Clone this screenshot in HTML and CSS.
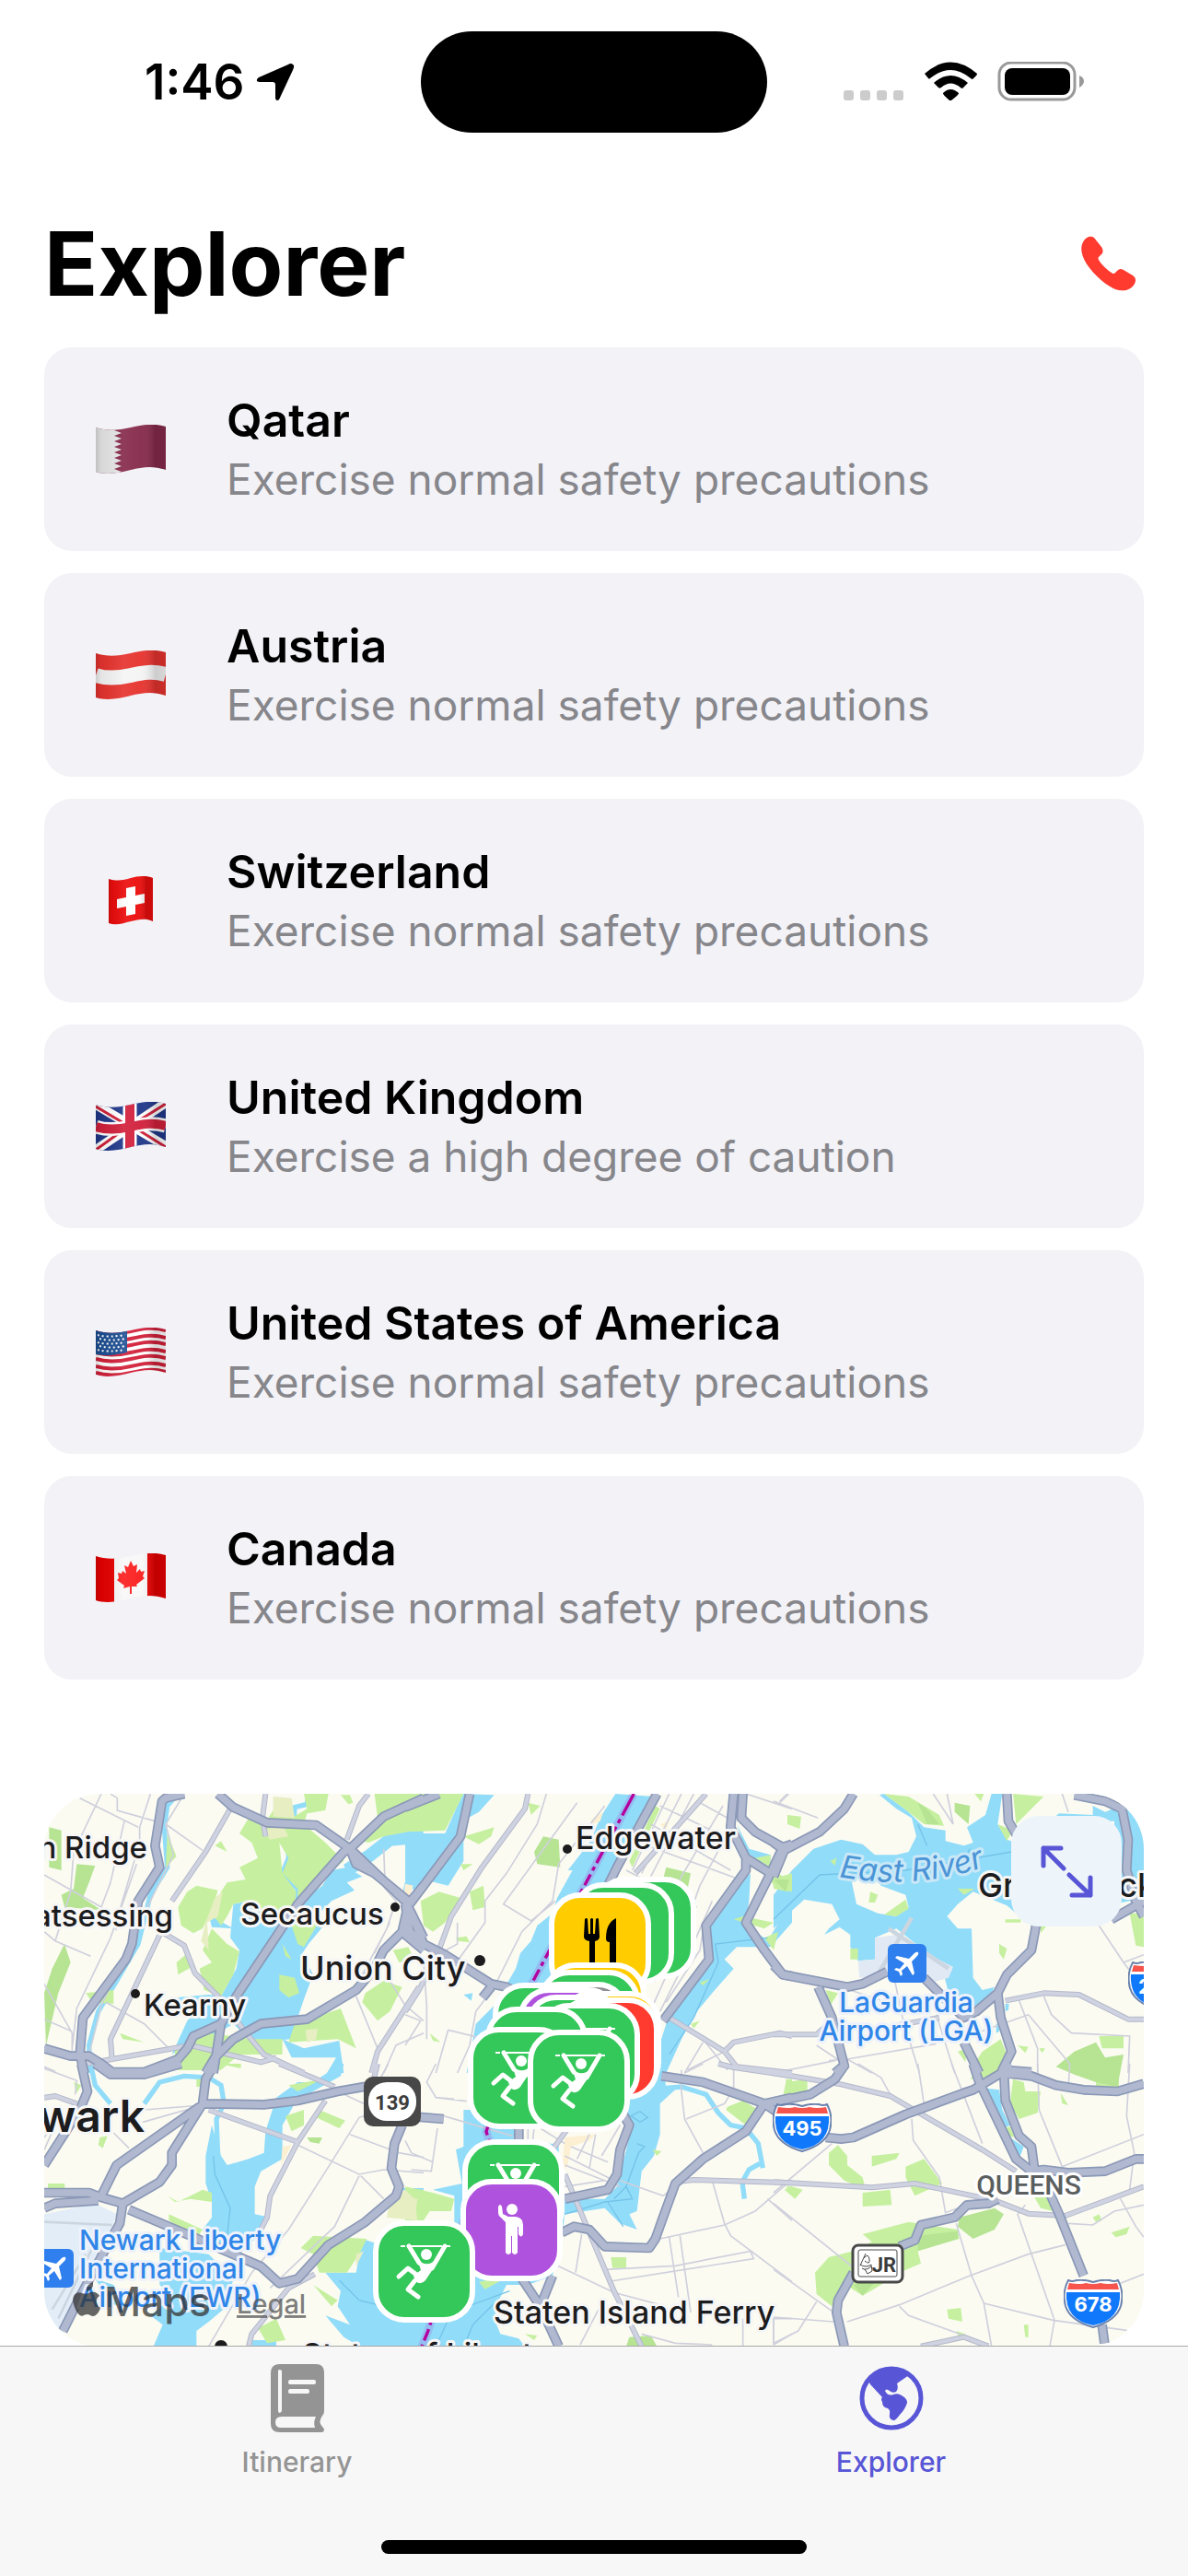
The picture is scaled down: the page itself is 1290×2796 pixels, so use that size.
FILE: index.html
```html
<!DOCTYPE html>
<html lang="en">
<head>
<meta charset="utf-8">
<meta name="viewport" content="width=device-width, initial-scale=1">
<title>Explorer</title>
<link rel="stylesheet" href="styles.css">
</head>
<body>
<svg class="sprite" width="0" height="0" aria-hidden="true">
  <defs>
    <clipPath id="flag-shape"><path d="M0 3C12 7 25 6 38 3S62-2 76 2V49C62 44 50 46 38 49S12 55 0 51Z"/></clipPath>
    <clipPath id="flag-square"><path d="M14 3C24 6 31 4 38 2S55-1 62 2V49C54 45 46 47 38 49S22 54 14 51Z"/></clipPath>
    <linearGradient id="flag-shade">
      <stop offset="0" stop-color="#000" stop-opacity=".16"/>
      <stop offset=".08" stop-color="#000" stop-opacity=".06"/>
      <stop offset=".4" stop-color="#fff" stop-opacity=".08"/>
      <stop offset=".65" stop-color="#fff" stop-opacity=".04"/>
      <stop offset=".85" stop-color="#000" stop-opacity=".16"/>
      <stop offset="1" stop-color="#000" stop-opacity=".12"/>
    </linearGradient>
    <path id="wave" d="M0 0C12 4 25 3 38 0S62-5 76-1"/>
    <symbol id="climber" viewBox="0 0 111 111">
      <path d="M30 28h5M41 28h34M80 28h4" fill="none" stroke="#fff" stroke-width="2"/>
      <path d="M39 28 50 46M78 28 64 52M28 61 38 52 50 61M45 66 38 75 49 83" fill="none" stroke="#fff" stroke-width="5" stroke-linecap="round" stroke-linejoin="round"/>
      <circle cx="58" cy="37" r="6" fill="#fff"/>
      <path d="M48 42Q58 52 68 43L71 44 57 65Q52 71 46 66L44 60 52 54Z" fill="#fff"/>
    </symbol>
    <symbol id="plane" viewBox="0 0 42 42">
      <rect width="42" height="42" rx="6" fill="#2f80ee"/>
      <path d="M33 9c-2-1-4 1-5 2l-5 5-13-3-2 2 10 6-5 6-4-1-2 2 5 2 2 5 2-2-1-4 6-5 6 10 2-2-3-13 5-5c1-1 3-3 2-5Z" fill="#fff"/>
    </symbol>
    <symbol id="shield" viewBox="0 0 64 53">
      <path d="M5 1Q9 3 14 1Q23 0 32 3Q41 0 50 1Q55 3 59 1Q66 14 62 29Q57 45 32 52Q7 45 2 29Q-2 14 5 1Z" fill="#fff" stroke="#6b82ad" stroke-width="2"/>
      <path d="M6 4Q19 6 24 4Q32 6 40 4Q48 6 58 4L60 11H4Z" fill="#f6544c"/>
      <path d="M3 14H61Q63 44 32 50Q1 44 3 14Z" fill="#1079fb"/>
    </symbol>
  </defs>
</svg>

<div class="screen">
  <header class="status">
    <div class="status-side status-left">
      <span>1:46</span>
      <svg class="location" viewBox="0 0 42 42" aria-hidden="true"><path d="M40 2C42 3 41 6 40 8L26 38C25 42 21 42 21 38V24Q21 21 18 21H4C0 21 0 18 3 16L35 2Q38 0 40 2Z"/></svg>
    </div>
    <div class="island"></div>
    <div class="status-side status-right">
      <svg width="262" height="44" viewBox="0 0 262 44" aria-label="Signal, Wi-Fi and battery">
        <g fill="#ccc"><rect y="31" width="11" height="11" rx="3"/><rect x="18" y="31" width="11" height="11" rx="3"/><rect x="36" y="31" width="11" height="11" rx="3"/><rect x="54" y="31" width="11" height="11" rx="3"/></g>
        <path d="M88 13Q116-12 145 13Q146 14 140 19Q139 19 138 18Q116 0 94 18Q93 19 92 18ZM98 23Q116 7 135 23L129 29Q128 29 127 28Q116 19 106 28Q104 29 103 28ZM108 34Q116 26 125 34Q126 35 117 42H115Q107 35 108 34Z"/>
        <rect x="169" y="1" width="82" height="40" rx="13" fill="none" stroke="#999" stroke-width="3"/>
        <rect x="175" y="7" width="71" height="29" rx="8"/>
        <path d="M256 15Q261 17 261 21T256 28Z" fill="#999"/>
      </svg>
    </div>
  </header>

  <main class="content">
    <div class="heading">
      <h1>Explorer</h1>
      <button class="call" type="button" aria-label="Emergency numbers">
        <svg viewBox="0 0 60 60" aria-hidden="true"><path d="M14 2C10-1 4 2 2 7C-2 14 1 25 10 36C18 46 28 54 37 58C46 61 54 59 58 52C60 48 59 45 56 43L46 37C43 35 41 36 39 38L37 40Q35 42 33 40C28 37 22 31 19 26Q18 24 19 23L22 20C24 18 24 15 22 12Z"/></svg>
      </button>
    </div>

    <ul class="countries">
      <li class="country">
        <svg class="flag" viewBox="0 0 76 53" role="img" aria-label="Flag of Qatar"><g clip-path="url(#flag-shape)"><path d="M0-2h76v60H0Z" fill="#862a4b"/><path d="M0-2H20L28 3 20 6 28 9 20 12 28 15 20 18 28 21 20 24 28 27 20 30 28 33 20 36 28 39 20 42 28 45 20 48 28 51 20 55H0Z" fill="#e6e6e6"/><path d="M0-2h76v60H0Z" fill="url(#flag-shade)"/></g></svg>
        <div class="country-text"><h2>Qatar</h2><p>Exercise normal safety precautions</p></div>
      </li>
      <li class="country">
        <svg class="flag" viewBox="0 0 76 53" role="img" aria-label="Flag of Austria"><g clip-path="url(#flag-shape)"><path d="M0-2h76v60H0Z" fill="#e6332e"/><use href="#wave" y="27" fill="none" stroke="#f4f4f4" stroke-width="16"/><path d="M0-2h76v60H0Z" fill="url(#flag-shade)"/></g></svg>
        <div class="country-text"><h2>Austria</h2><p>Exercise normal safety precautions</p></div>
      </li>
      <li class="country">
        <svg class="flag" viewBox="0 0 76 53" role="img" aria-label="Flag of Switzerland"><g clip-path="url(#flag-square)"><path d="M0-2h76v60H0Z" fill="#ec0d0d"/><path d="M33 13 43 11V21L53 19V29L43 31V41L33 43V33L23 35V25L33 23Z" fill="#fff"/><path d="M14-2h48v60H14Z" fill="url(#flag-shade)"/></g></svg>
        <div class="country-text"><h2>Switzerland</h2><p>Exercise normal safety precautions</p></div>
      </li>
      <li class="country">
        <svg class="flag" viewBox="0 0 76 53" role="img" aria-label="Flag of the United Kingdom"><g clip-path="url(#flag-shape)"><path d="M0-2h76v60H0Z" fill="#20388a"/><path d="M0 3 76 48M0 52 76 1" stroke="#fff" stroke-width="10"/><path d="M0 5 32 24M0 52 32 29M76 49 44 29M76 2 44 22" stroke="#d0203a" stroke-width="3"/><use href="#wave" y="27" fill="none" stroke="#fff" stroke-width="15"/><path d="M37-2V58" stroke="#fff" stroke-width="15"/><use href="#wave" y="27" fill="none" stroke="#d2203c" stroke-width="10"/><path d="M37-2V58" stroke="#d2203c" stroke-width="10"/><path d="M0-2h76v60H0Z" fill="url(#flag-shade)"/></g></svg>
        <div class="country-text"><h2>United Kingdom</h2><p>Exercise a high degree of caution</p></div>
      </li>
      <li class="country">
        <svg class="flag" viewBox="0 0 76 53" role="img" aria-label="Flag of the United States"><g clip-path="url(#flag-shape)"><path d="M0-4h76v64H0Z" fill="#fff"/><g fill="none" stroke="#d2203a" stroke-width="4"><use href="#wave" y="4"/><use href="#wave" y="12"/><use href="#wave" y="19"/><use href="#wave" y="27"/><use href="#wave" y="34"/><use href="#wave" y="42"/><use href="#wave" y="49"/></g><path d="M0 0H34V27Q14 32 0 29Z" fill="#1d4f93"/><path d="M2 8q12 3 30 0M4 12q12 3 28 0M2 16q12 3 30 0M4 20q12 3 28 0M2 24q12 3 30 0" fill="none" stroke="#fff" stroke-width="2" stroke-dasharray="2 3"/><path d="M0-2h76v60H0Z" fill="url(#flag-shade)"/></g></svg>
        <div class="country-text"><h2>United States of America</h2><p>Exercise normal safety precautions</p></div>
      </li>
      <li class="country">
        <svg class="flag" viewBox="0 0 76 53" role="img" aria-label="Flag of Canada"><g clip-path="url(#flag-shape)"><path d="M0-2h76v60H0Z" fill="#f8f8f8"/><path d="M0-2H20V58H0ZM56-2H76V58H56Z" fill="#e60000"/><path d="M38 8 41 14 45 12 44 21 48 17 49 20 53 19 51 25 53 27 44 34 45 36 39 36V44H37V36L30 38 31 35 23 29 25 27 24 21 28 22 29 19 33 22 31 13 35 15Z" fill="#fb1f1f"/><path d="M0-2h76v60H0Z" fill="url(#flag-shade)"/></g></svg>
        <div class="country-text"><h2>Canada</h2><p>Exercise normal safety precautions</p></div>
      </li>
    </ul>

    <section class="map" aria-label="Map">
      <svg class="map-canvas" viewBox="0 0 1194 600">
        <defs>
          <g id="highways">
            <g transform="translate(-24 -51)"><path d="M480 51 420 65 408 75 385 220 400 290 330 400 310 540 290 590 150 780 140 900 155 960M24 880 110 905 170 905 210 930 245 957 350 957 460 915 490 880 510 840 600 800 650 710 850 410 1000 240 1020 230 1130 125 1260 65M590 51 640 95 750 145 910 153 1020 230 1210 410M1020 230 1040 280 1100 310 1210 400M1260 350 1210 410 1190 500 1130 560 1100 620 1040 690 880 785 730 800 640 850 580 910 550 960M600 800 575 960M1210 420 1200 510 1260 560M1210 420 1260 520"/></g>
            <g transform="translate(1176 -51)"><path d="M210 51 180 190 15 410M0 95 110 51M0 410 20 440 60 540 130 575 280 670 330 680 400 720M0 410 15 500 60 545M280 680 252 715M820 51 690 290 660 350M1070 51 1060 160 1110 260 1110 300 980 480 990 590 840 790M1100 51 1095 130 1140 175 1230 225 1190 310 1110 470 1170 560 1230 640 1260 645M1110 260 1190 310M1230 225 1260 215"/></g>
            <g transform="translate(2376 -51)"><path d="M260 51 230 100 150 175 35 235 0 210M35 235 0 320M0 610 30 640 240 680 290 670 370 630M490 650 560 720 620 780 660 760 730 700 760 640 840 560 855 480M760 51 765 140 800 200M980 55 1080 75 1135 100 1155 200 1150 300 1180 400 1206 450M1100 460 1206 400M145 680 190 780 230 935 200 960M620 860 670 960M730 700 740 780 775 890 745 950 840 957"/></g>
            <g transform="translate(-24 879)"><path d="M24 420 170 420 210 435 280 455 400 385 440 330 440 290 540 130 550 50 580 0M210 430 260 330 530 140M24 330 140 150 165 90 145 0M190 0 240 35 350 35 470 0M540 130 740 133 850 120 980 90 1065 75 1200 90M24 470 60 455 200 445M280 455 270 520 220 610 140 760 85 870M300 475 500 560 650 625 730 660 790 715 850 700 950 590 1070 515 1170 430 1180 400 1155 340 1165 260 1190 200"/></g>
            <g transform="translate(1176 879)"><path d="M690 130 730 200 700 280 690 360 660 410 520 440M835 40 970 60 1170 130 1260 110M1170 130 1110 220 970 310 880 390 840 500 815 570 795 600 650 595 600 540 550 530 510 550M380 700 440 790 500 920M480 690 440 790M370 200V250M0 170 125 180M1170 130 1260 190"/></g>
            <g transform="translate(2376 879)"><path d="M235 0 200 50 120 100 0 125M170 240 220 245 260 240 430 165 620 95 650 85 750 25 770 0M650 0 670 60 790 310 840 350M750 25 755 120 800 235 840 270 850 345M750 30 840 40 920 70 1010 85 1120 90 1206 65M840 350 880 345 960 355 1080 350 1180 310 1206 310M850 350 890 400 930 490 1010 690M1070 850 1078 910M730 440 700 455 630 460 590 500 480 525 460 575 410 595M260 680 210 770 205 810 230 920"/></g>
          </g>
          <g id="avenues">
            <g transform="translate(-24 -51)"><path d="M630 100 550 240 440 400M405 500 240 850 245 915M405 500 480 545 515 635 590 710 690 840 740 900 870 960M745 51 735 130 745 190M160 930 500 870 730 925 780 910M1080 51 1050 90 1010 200M1245 680 1110 890 1090 960"/></g>
            <g transform="translate(1176 -51)"><path d="M400 51 390 100 250 290 150 450 110 560M110 560 45 690 0 760M980 51 750 310M860 780 1040 890 1080 940 1260 960M1040 890 1070 860 1220 830 1260 840"/></g>
            <g transform="translate(2376 -51)"><path d="M0 835 140 835 190 790M400 805 540 780M755 725 880 700 995 705 1155 785H1206"/></g>
            <g transform="translate(-24 879)"><path d="M560 150 850 255M790 0 970 75M940 120 850 255 760 430 750 500 730 540M1110 0 1095 60M24 110 60 105 130 130M905 685 820 730 700 880 690 920"/></g>
            <g transform="translate(1176 879)"><path d="M480 280 530 210M520 360 680 740 770 920M880 385 940 378 1260 388M1020 0 1070 12 1260 40"/></g>
            <g transform="translate(2376 879)"><path d="M0 30 210 65 380 105 680 280 790 350M0 385 320 403 460 390 650 430 720 445 830 488 950 495 1206 400M480 920 620 890 700 920"/></g>
          </g>
        </defs>

        <svg viewBox="0 0 3582 1800" width="1194" height="600">
          <rect width="3582" height="1800" fill="#fbfbf2"/>

          <g class="water">
            <g transform="translate(-24 -51)">
              <path class="creek" d="M460 51 425 90 415 160 425 290 370 380 330 540 260 660 200 760 170 870 175 960"/>
              <path d="M640 410 690 400 760 470 850 410 930 350 960 300 1010 290 1060 320 1010 340 1035 365 960 400 920 440 935 480 885 540 865 570 900 640 870 720 850 780 830 850 700 860 640 800 590 830 500 860 440 900 490 790 540 740 440 730 450 715 560 705 600 710 650 620 660 560 630 520ZM800 850 870 880 985 855 1000 960H945L975 910H830Z"/>
              <path class="creek" d="M885 55 880 85 840 95 838 130 815 175 820 260 800 310 850 360V420M870 170 970 260M1260 290 1210 330 1195 390"/>
              <path class="river" d="M1260 190 1150 200 1080 255 1010 300"/>
              <path d="M560 445 640 490 570 485Z"/>
            </g>
            <g transform="translate(1176 -51)">
              <path d="M685 51 640 120 600 210 530 300H545L495 390 480 440 430 480 410 530 375 570 360 620 325 680 290 740 230 800 200 960H400L500 640 700 280 810 60ZM1080 150 1120 230 1190 250V285L1150 270 1110 240ZM1125 310 1120 400 1110 470 1180 530 1260 400V470L1190 550H1080L1040 590 1070 620 1000 700 950 760 900 850 850 960H800L850 800 990 600 980 480 1100 330ZM0 180 130 180 170 90 190 51 290 55 240 110 205 130 190 200 190 270 140 350 60 330 40 380 0 330ZM190 705 220 700 215 725Z"/>
            </g>
            <g transform="translate(2376 -51)">
              <path d="M0 380 60 300 130 230 220 200 290 215 330 250 400 250 440 240 465 190 450 130 400 100 345 55 360 51 440 110 490 160 560 170V205L620 220 650 210 630 160 690 120 710 51H745L730 150 760 200 790 210V440L760 415 650 370 600 410 565 450 600 490H645L650 650 680 690 720 680 700 720 640 750 580 740 560 660 540 600 400 490 330 520V590L275 595 250 550V510L215 485 165 510 180 490 215 460 190 410 100 395 50 440 0 490ZM1040 90 1080 110 1130 90 1180 100 1206 200V440L1160 400 1110 410V140H900L930 115 1040 120ZM725 800l15-5-5 30-10 5ZM755 735h12l-2 20-10 5Z"/>
            </g>
            <g transform="translate(-24 879)">
              <path class="creek" d="M175 0 190 70 240 130M350 130 400 60 480 40 560 45 600 70 610 130 585 180 590 300"/>
              <path d="M570 200 600 300 620 330 690 310 740 290 745 220 780 110 850 60H900L960 20 970 0H1000L990 40 900 90 840 130 800 200V310L730 350 710 400V490L760 500 720 560 660 620 600 600 540 540 570 500V450L550 390V300ZM400 600 560 620 640 700 620 790 560 840 520 870V920H380L410 850 370 820 440 760 400 720ZM190 700 250 720 300 800 240 780ZM1060 570 1150 600 1260 600V920H1050L1000 890 940 820 1020 850 980 790 990 740 940 680 1040 680ZM700 900h80v20h-80ZM1180 405h80v40Z"/>
            </g>
            <g transform="translate(1176 879)">
              <path d="M190 150H380V260H500V430L520 440 650 440 690 400 740 200 720 160V0H840L850 80 890 75 830 130V230L810 300 770 350 755 480 730 490 755 540 700 520 650 470 520 490 510 560 480 690 400 720 330 720 300 780 290 830 310 880 370 895 390 920H0V560H160V430L90 410 185 390 165 280 190 270Z"/>
              <path class="creek" d="M840 80 900 75 980 100 1020 160 1060 200 1110 210 1150 260 1165 340M1155 325 1120 345 1098 385 1105 440"/>
            </g>
            <g transform="translate(2376 879)"><path d="M695 80 735 85 745 150 770 200 750 210 720 170ZM770 240 815 270 800 310 770 270Z"/></g>
          </g>

          <g fill="#c6f0a0">
            <path transform="translate(-24 -51)" d="M620 340 680 330 660 290 720 260 700 210 660 180 690 130 740 150 780 90 830 130 880 100 870 51H950L940 105 880 115 870 150 940 210 1000 270 960 300 850 410 850 360 800 310 820 260 790 210 800 310 845 370 840 415 760 470 690 400 640 410 620 450 600 480 570 440 600 370ZM570 490 620 540 660 565 640 640 600 710 545 690 530 620 570 600 540 560ZM490 370 520 350 590 365 570 430 540 490 510 505 470 480 460 420ZM1100 51H1260V165L1130 190 1080 210 1040 200 1110 130ZM840 800 990 750 1040 880 980 850 820 860ZM450 880 560 830 700 850H800V900H660L600 950H450ZM270 830 350 860 280 850ZM455 600 490 570 515 610 460 640ZM580 220 600 205 620 240ZM1070 700 1130 660 1190 680 1150 760 1110 790 1060 730ZM160 700 250 690V735L180 730ZM800 540 830 590 810 580ZM790 640 840 650 855 700 820 715 790 690ZM1160 560 1210 550 1230 590 1180 600ZM425 180 455 255 420 290ZM990 55h30l10 25-15 5ZM830 480 930 450 870 550 850 540Z"/>
            <path transform="translate(1176 -51)" d="M0 100 40 51H190L130 170 20 175ZM190 190 290 160 280 190 240 215ZM400 80 440 90 410 120ZM50 400 110 370 180 390 130 470 90 500 60 480ZM210 370 255 350 260 420 220 430ZM1140 260 1190 250V290ZM1190 330 1260 310V370L1200 350ZM1070 460 1100 450 1200 470 1170 490ZM1170 520 1215 500 1200 560ZM80 830 115 860 90 855ZM930 800 960 790 940 815ZM180 280 220 280 190 300ZM165 520 200 515 210 535 170 530ZM815 90 830 100 740 290 730 270ZM960 665 990 655 970 675Z"/>
            <path transform="translate(2376 -51)" d="M360 51 440 60 540 120 555 155 490 150 440 110ZM655 51h30l-10 25ZM780 51 880 60 840 100 790 150ZM730 150 780 170 760 205ZM45 120 90 125 85 165 45 150ZM0 300 45 330 50 370 0 360ZM600 360 655 360 620 380ZM735 540 760 555 750 590 735 570ZM1160 440H1206V550L1180 545ZM170 690 210 700 185 740ZM680 890 740 850 760 900 740 950 690 960 660 920ZM795 870 830 875 820 895ZM600 890 630 880 625 925ZM1060 840H1140V880H1070ZM865 880H885L875 895ZM250 555h25v35h-25ZM755 460h50v10h-50ZM185 270 205 260 200 285ZM870 480h20l-20 25Z"/>
            <path transform="translate(-24 879)" d="M810 170 870 150V200L830 220ZM920 150 1005 185 985 210 910 175ZM205 240 230 235 215 275 200 265ZM425 430 460 450 540 410 570 420V450L500 440 450 450ZM430 490 540 540 520 570 430 510ZM860 600 900 560 1075 570 1050 620 1010 680 920 680 900 620ZM720 860 780 830 810 900 750 910ZM900 720 980 770 960 790ZM120 60 145 70 130 95ZM36 390h55v15h-55ZM455 0H560V20H460ZM520 50h30v25h-30ZM820 70 930 50 850 90ZM590 0h75v15ZM1200 410h60v100h-60Z"/>
            <path transform="translate(1176 879)" d="M0 400 90 420 160 440 150 480 80 480 60 510 0 500ZM1050 140 1100 120 1150 150 1110 200 1045 150ZM1240 50h20v60h-20ZM805 280 835 285 820 300ZM670 630h50v35h-45ZM390 880 430 885 420 900ZM240 710 340 690 260 735ZM1240 400h20v30Z"/>
            <path transform="translate(2376 879)" d="M680 0H740L720 40 640 50ZM780 50 815 60 820 90H870L860 160 800 180 770 130ZM40 60 110 50V90L80 110H30ZM180 290 210 265 240 300V330L290 370 300 410 230 380 180 330ZM320 300 410 290 400 310 320 335ZM430 335 490 310 550 390 460 430 430 370ZM290 420 380 410 385 460 290 465ZM35 410 60 400 95 410 70 440ZM850 435 900 430 910 480 870 470ZM290 555 440 515 470 520 600 540 605 570 470 610 480 650 410 680 350 720 290 755 250 730 190 790 140 750 135 680 180 630 260 610 320 580ZM565 800 610 795 615 840 570 830ZM1040 500 1060 490 1070 510 1050 515ZM1100 550 1160 530 1150 555 1115 565ZM935 95 960 135 940 130ZM815 850h15v40h-10ZM595 870 625 880 605 895ZM750 210 770 205 785 240 765 235ZM1050 40h75v35h-75Z"/>
          </g>
          <g fill="#b6e493">
            <path transform="translate(-24 -51)" d="M40 160 80 170V300L40 290ZM130 280 190 285 170 340 150 390 210 430 90 420 80 380 120 360ZM90 540 110 600 70 700 30 870 24 700 50 620Z"/>
            <path transform="translate(1176 -51)" d="M420 240 450 190 500 200 505 290 430 280ZM850 290 930 310 920 360 840 330ZM1200 330 1250 330 1240 370Z"/>
            <path transform="translate(2376 -51)" d="M590 80 640 90 635 150 590 110ZM980 890 1050 860 1080 910 1140 900 1120 1005 1050 990 980 965 920 940ZM470 80 500 100 540 150 500 150ZM315 370 340 380 330 405H310Z"/>
            <path transform="translate(2376 879)" d="M605 500 720 470 750 490 720 540 650 570 600 530ZM470 560 600 545 600 570 470 610ZM260 720 350 690 290 755Z"/>
            <path transform="translate(1176 879)" d="M730 890 800 885 820 920H720Z"/>
            <path transform="translate(-24 879)" d="M880 240H930L920 260 890 255Z"/>
          </g>
          <g fill="#e6eec2">
            <path transform="translate(-24 -51)" d="M770 60 830 65 840 130 770 125ZM580 390 605 370 590 450 555 470 560 560 535 530 550 470ZM875 820 915 815 910 850 880 860ZM740 170 800 150 820 190 760 200Z"/>
            <path transform="translate(-24 879)" d="M1150 450 1200 410 1230 440 1240 510 1140 500ZM1040 620 1065 610 1040 660Z"/>
            <path transform="translate(1176 879)" d="M0 430 40 440 30 500 0 500Z"/>
          </g>
          <g fill="#fdf0d2">
            <path transform="translate(1176 879)" d="M520 240 620 230 600 250 540 270 530 330 510 350Z"/>
            <path transform="translate(-24 879)" d="M800 270 830 265 795 330Z"/>
            <path transform="translate(1176 -51)" d="M605 135 645 110 635 140 610 150ZM0 345 25 350 10 390H0ZM830 150l30-10-10 30Z"/>
            <path transform="translate(-24 -51)" d="M1200 345 1225 350 1210 390 1195 380Z"/>
          </g>
          <path transform="translate(2376 -51)" fill="#fbfbf2" d="M255 340 280 310 330 320 350 350 430 380 440 420 400 450 340 440 270 410Z"/>
          <path transform="translate(2376 -51)" fill="#c6f0a0" d="M315 370 340 380 330 405H310ZM360 445 430 395 440 425 400 450Z"/>
          <g transform="translate(2376 -51)"><path fill="#e1eaf4" d="M275 595 330 590V520L400 510 500 570 585 615 570 650 520 665 400 640 280 650Z"/><path d="M375 490 570 620M450 455 345 630" fill="none" stroke="#cbd6e1" stroke-width="14"/></g>
          <g transform="translate(-24 879)"><path fill="#e2edf7" d="M24 490 190 455 260 490 220 600 130 800 90 870 60 890 24 860Z"/><path d="M24 515 245 525M200 560 70 830M160 620 50 800" fill="none" stroke="#cbd6e1" stroke-width="8"/></g>

          <g class="ferry-lanes">
            <path transform="translate(2376 -51)" d="M0 460 150 315 430 300 775 240M640 230 620 270M470 150 500 220"/>
            <path transform="translate(1176 879)" d="M110 900 150 810 340 740M200 900 220 850 300 770M520 490 650 450 740 440 720 400 760 290 780 270 755 260M735 170 765 155 790 175 765 190ZM660 450 710 530M680 440 720 400"/>
            <path transform="translate(1176 -51)" d="M860 900 940 780 1020 600 1010 540 1180 520"/>
            <path transform="translate(-24 879)" d="M575 300 580 360 630 470 620 560M985 705 1050 770 1130 790"/>
          </g>

          <g class="streets">
            <path transform="translate(-24 -51)" d="M210 51 120 240 110 370 60 530M24 315 210 420 260 495M140 65 330 160M240 51 262 65V105L385 140M370 51 335 160V210L270 430M285 140 240 340 210 420M480 51 420 150 445 250 340 460M24 500 60 530 175 580M24 670 115 830V900M420 150 540 235M325 280 240 520 130 750 115 880M225 730 350 800 430 880M340 460 210 740 170 900M1130 230 1135 360 1170 400 1140 490 1060 640M1040 710 1110 880M1150 660 1200 740 1260 790M1260 830 1170 870 1130 960M24 940 60 955M24 785 115 825M1150 470 1100 570"/>
            <path transform="translate(1176 -51)" d="M460 51 430 150 330 310 260 400V470L160 610M560 80 320 410 410 465 490 400M650 90 500 280 480 400 380 500 290 680 230 760 210 870 170 960M1110 51 1260 100M860 51 740 300M900 51 770 310M940 51 800 320M1035 90 900 320 840 440M1060 160 960 350 870 600 780 800M1000 400 930 560 830 760M975 470 960 560 850 730M830 90 1040 190M800 150 1060 300M960 80 1050 130M760 210 1090 330M720 300 950 420M170 470 170 540 60 600 70 740 70 850M1220 80 1250 51M0 770 50 790 0 870M140 820 260 850M140 820 100 960M970 860 910 960M970 850 1050 950M920 950 1040 890"/>
            <path transform="translate(2376 -51)" d="M145 130 0 75M1060 480 1140 600 1170 640M395 660 420 780 475 960M530 770 590 960M240 915 530 865M800 725 860 880V960M880 710 905 770 970 830 1160 840 1155 960M830 770 965 930M20 75 45 51M180 920 240 915 320 960M660 830 830 770M520 51 585 150 565 51M940 51 960 110M0 960 200 920M1140 600 1206 575M250 690 400 740M140 870 230 930"/>
            <path transform="translate(-24 879)" d="M24 15 130 55 125 100M350 150 540 135 345 190M250 225 300 275M850 265 1050 360 1130 345 1260 355M1065 170 1050 175 960 320 820 540 700 680 560 920M1050 365 970 530 760 730M1020 230 1180 290 1260 305M1055 365 1130 440M24 240 70 180M24 280 60 200M1145 0 1080 120M980 90 1065 130"/>
            <path transform="translate(1176 879)" d="M700 380 840 430 860 415M900 20V90L910 180 970 290M1000 380 1040 520 1060 560 1260 710M830 570 1040 525 1140 480 1250 385M860 565 890 760M895 560 930 810M650 670 880 658 1125 610 1135 635 670 708M575 555 555 680M490 655 680 745 830 785M770 880 880 910 1000 915M1100 920V830M1200 915V830H1260M1070 20V80L1040 130 915 180M100 110 160 115M100 0 70 60 100 110 200 122M105 210 85 350 20 345M0 250 20 290 90 320M1180 440 1260 510M125 170 350 235M400 210V250M420 210 415 250M440 210 520 260M520 300 680 380M540 270 660 320M520 400 650 380M560 310 600 230M640 300 700 200M620 230 600 340M520 330 700 400M570 915 630 800M1200 915 1260 880M910 30 970 0"/>
            <path transform="translate(2376 879)" d="M470 0 490 130M450 180 455 250 540 370 560 485 600 470M580 0 680 260M860 0 865 150 940 335 1206 230M190 260 0 420M0 455 255 660M0 670 190 805M195 840 0 825M240 840 410 785 640 690 830 620 950 590M595 520 645 690 685 780 710 920M410 790 440 820 620 885M685 780 910 835 1150 868M820 460 795 490 915 835 900 920M960 520 1040 525 1110 480 1206 460M1130 440 1180 530 1206 565M1160 0 1150 170 1175 290 1160 410M1130 715 1206 685M140 775 80 870 0 910M275 0 350 45 380 100M965 0 960 80M0 830V910"/>
          </g>
          <use href="#avenues" class="avenue-edge"/>
          <use href="#avenues" class="avenue"/>
          <use href="#highways" class="highway-edge"/>
          <use href="#highways" class="highway"/>
          <g fill="none">
            <path d="M1921 0 1590 614 1440 1100 1450 1130 1250 1750 1230 1800" stroke="#a03fd0" stroke-opacity=".2" stroke-width="26"/>
            <path d="M1921 0 1590 614 1440 1100 1450 1130 1250 1750 1230 1800" stroke="#b3009e" stroke-width="10" stroke-dasharray="80 14 14 14 40 14"/>
          </g>
        </svg>

        <g class="place">
          <text x="112" y="70" text-anchor="end">Glen Ridge</text>
          <text x="140" y="144" text-anchor="end">Watsessing</text>
          <text x="291" y="142" text-anchor="middle">Secaucus</text>
          <text x="108" y="241">Kearny</text>
          <text x="577" y="60" class="medium">Edgewater</text>
          <text x="1014" y="112" class="large">Great Neck</text>
          <text x="278" y="202" class="large">Union City</text>
          <text x="488" y="575" class="medium">Staten Island Ferry</text>
          <text x="280" y="621" class="medium">Statue of Liberty</text>
          <text x="109" y="367" class="city" text-anchor="end">Newark</text>
          <circle cx="381" cy="123" r="5"/><circle cx="473" cy="181" r="6"/><circle cx="99" cy="217" r="5"/><circle cx="568" cy="60" r="5"/><circle cx="192" cy="600" r="7"/>
        </g>
        <text class="borough" x="1069" y="435" text-anchor="middle">QUEENS</text>
        <path id="river-line" d="M863 90Q950 106 1030 76" fill="none"/>
        <text class="river-name"><textPath href="#river-line">East River</textPath></text>
        <use href="#plane" x="916" y="163" width="42" height="42"/>
        <use href="#plane" x="-10" y="494" width="42" height="42"/>
        <g class="airport">
          <text x="936" y="237" text-anchor="middle">LaGuardia</text>
          <text x="936" y="268" text-anchor="middle">Airport (LGA)</text>
          <text x="38" y="495">Newark Liberty</text>
          <text x="38" y="526">International</text>
          <text x="38" y="557">Airport (EWR)</text>
        </g>

        <use href="#shield" x="791" y="336" width="64" height="53"/>
        <use href="#shield" x="1107" y="527" width="64" height="53"/>
        <use href="#shield" x="1177" y="182" width="64" height="53"/>
        <g class="route">
          <text x="823" y="371">495</text><text x="1139" y="562">678</text><text x="1209" y="217">295</text>
        </g>
        <rect x="347" y="307" width="62" height="54" rx="10" fill="#484848"/>
        <rect x="352" y="313" width="52" height="42" rx="20" fill="#fff"/>
        <text class="state-route" x="378" y="343">139</text>
        <rect x="878" y="490" width="54" height="40" rx="6" fill="#fff" stroke="#484848" stroke-width="3"/>
        <rect x="884" y="495" width="42" height="29" rx="2" fill="none" stroke="#484848"/>
        <path d="M886 512 892 499M890 504q5-6 6 1t-5 2M886 511q6 4 12 0l1 7-5 3-3-5M888 515q4 3 10-2" fill="none" stroke="#484848"/>
        <text class="state-route" x="912" y="519">JR</text>

        <g class="pins">
          <g transform="translate(597 90)"><rect x="3" y="3" width="105" height="105" rx="31" fill="#34c759"/></g>
          <g transform="translate(573 96)"><rect x="3" y="3" width="105" height="105" rx="31" fill="#34c759"/></g>
          <g transform="translate(548 107)"><rect x="3" y="3" width="105" height="105" rx="31" fill="#ffcc00"/><path class="plain" d="M39 29q2-2 3 0l1 16h2V29q2-2 3 0v16h2l1-16q2-2 3 0l1 19q0 4-5 5V84h-6V53q-6-1-6-5ZM73 28V84H66V54Q62 54 62 50 62 33 73 28Z"/></g>
          <g transform="translate(543 183)"><rect x="3" y="3" width="105" height="105" rx="31" fill="#ffcc00"/></g>
          <g transform="translate(536 191)"><rect x="3" y="3" width="105" height="105" rx="31" fill="#34c759"/></g>
          <g transform="translate(487 205)"><rect x="3" y="3" width="105" height="105" rx="31" fill="#34c759"/></g>
          <g transform="translate(524 204)"><rect x="3" y="3" width="105" height="105" rx="31" fill="#8e8e93"/></g>
          <g transform="translate(514 210)"><rect x="3" y="3" width="105" height="105" rx="31" fill="#af52de"/></g>
          <g transform="translate(559 214)"><rect x="3" y="3" width="105" height="105" rx="31" fill="#ffcc00"/></g>
          <g transform="translate(522 218)"><rect x="3" y="3" width="105" height="105" rx="31" fill="#34c759"/></g>
          <g transform="translate(557 221)"><rect x="3" y="3" width="105" height="105" rx="31" fill="#ff3b30"/></g>
          <g transform="translate(536 227)"><rect x="3" y="3" width="105" height="105" rx="31" fill="#34c759"/><use href="#climber" width="111" height="111"/></g>
          <g transform="translate(479 231)"><rect x="3" y="3" width="105" height="105" rx="31" fill="#34c759"/></g>
          <g transform="translate(460 253)"><rect x="3" y="3" width="105" height="105" rx="31" fill="#34c759"/><use href="#climber" width="111" height="111"/></g>
          <g transform="translate(525 256)"><rect x="3" y="3" width="105" height="105" rx="31" fill="#34c759"/><use href="#climber" width="111" height="111"/></g>
          <g transform="translate(454 375)"><rect x="3" y="3" width="105" height="105" rx="31" fill="#34c759"/><use href="#climber" width="111" height="111"/></g>
          <g transform="translate(452 418)"><rect x="3" y="3" width="105" height="105" rx="31" fill="#af52de"/><g fill="#fff"><circle cx="56" cy="33" r="6"/><path class="plain" d="M41 30q2-4 4 0l1 8 6 3h8q8 1 8 9V60q-2 5-5 0V52h-1V80q-3 4-6 0V62h-1V80q-3 4-6 0V47L44 42q-3-2-3-5Z"/></g></g>
          <g transform="translate(357 463)"><rect x="3" y="3" width="105" height="105" rx="31" fill="#34c759"/><use href="#climber" width="111" height="111"/></g>
        </g>

        <g class="attribution">
          <path d="M57 542C54 540 50 541 48 542S43 543 41 542C35 539 29 545 32 554C34 562 39 569 43 566Q47 564 50 566C55 569 59 564 61 558C56 555 55 548 60 545Q59 543 57 542ZM46 540Q45 533 53 530Q54 538 46 540Z"/>
          <text x="65" y="567" class="brand">Maps</text>
          <a href="#legal"><text x="209" y="564" class="legal">Legal</text></a>
        </g>
      </svg>
      <button class="expand" type="button" aria-label="Expand map">
        <svg viewBox="0 0 120 120" aria-hidden="true"><path d="M54 35H35V54M35 35 57 57M63 64 86 86M86 67V86H66"/></svg>
      </button>
    </section>
  </main>

  <footer class="tabbar">
    <nav class="tabs">
      <a class="tab" href="#itinerary">
        <svg viewBox="0 0 74 74" aria-hidden="true"><path fill-rule="evenodd" d="M17 0H57Q66 0 66 9V51Q66 54 64 56Q59 63 64 68Q66 70 66 71Q66 74 63 74H18Q8 74 8 65V10Q8 0 17 0ZM17 6Q16 6 16 8V51Q16 53 18 53Q20 52 20 50V8Q20 6 17 6ZM29 17Q27 17 27 20Q27 22 29 22H55Q57 22 57 20Q57 17 55 17ZM29 27Q27 27 27 30Q27 32 29 32H48Q50 32 50 30Q50 27 48 27ZM20 57Q13 57 13 63T19 69H56Q54 63 57 57Z"/></svg>
        <span>Itinerary</span>
      </a>
      <a class="tab active" href="#explorer" aria-current="page">
        <svg viewBox="0 0 74 74" aria-hidden="true"><circle cx="37" cy="37" r="32" fill="none" stroke="currentColor" stroke-width="5"/><path d="M37 3Q50 3 56 12L43 21Q45 27 42 30 38 32 35 29 31 26 30 29 33 35 39 33 44 31 48 34 54 37 54 42 52 49 46 55 41 62 39 61 34 60 35 54 36 50 33 48 27 47 27 41 25 38 27 36L14 22 12 18Q22 3 37 3Z"/></svg>
        <span>Explorer</span>
      </a>
    </nav>
    <div class="home-indicator"></div>
  </footer>
</div>
</body>
</html>
```
FILE: styles.css
```css
* {
  box-sizing: border-box;
}

body {
  margin: 0;
  background: #fff;
  color: #000;
  font-family: Inter, "Liberation Sans", sans-serif;
}

h1,
h2,
p,
ul {
  margin: 0;
  padding: 0;
}

button {
  padding: 0;
  border: 0;
  background: none;
}

svg {
  display: block;
}

.sprite {
  position: absolute;
}

.screen {
  display: flex;
  flex-direction: column;
  min-height: 100vh;
}

/* Status bar */
.status {
  display: grid;
  grid-template-columns: 1fr 376px 1fr;
  align-items: center;
  height: 177px;
}

.island {
  height: 110px;
  border-radius: 55px;
  background: #000;
}

.status-side {
  display: flex;
  align-items: center;
}

.status-left {
  gap: 12px;
  padding-left: 157px;
  font-size: 53px;
  font-weight: 600;
}

.status-right {
  justify-content: flex-end;
  padding-right: 112px;
}

.location {
  width: 42px;
  height: 42px;
}

/* Content */
.content {
  flex: 1;
  padding: 0 48px;
}

.heading {
  display: flex;
  align-items: center;
  justify-content: space-between;
  height: 200px;
  padding: 18px 8px 0 0;
}

h1 {
  font-size: 96px;
  line-height: 120px;
  font-weight: 700;
}

.call svg {
  width: 60px;
  height: 60px;
  fill: #ff3b30;
}

.countries {
  display: grid;
  gap: 24px;
  list-style: none;
}

.country {
  display: flex;
  align-items: center;
  gap: 66px;
  padding: 46px 56px;
  min-height: 221px;
  border-radius: 30px;
  background: #f2f2f7;
}

.flag {
  flex: none;
  width: 76px;
  height: 53px;
}

.country h2 {
  font-size: 50px;
  line-height: 64px;
  font-weight: 600;
}

.country p {
  color: #86868b;
  font-size: 46px;
  line-height: 64px;
}

/* Map */
.map {
  position: relative;
  margin-top: 124px;
  border-radius: 60px;
  overflow: hidden;
}

.map-canvas {
  width: 100%;
  height: auto;
}

.water {
  fill: #91dcf9;
}

.creek,
.river {
  fill: none;
  stroke: #91dcf9;
  stroke-width: 16px;
}

.river {
  stroke-width: 42px;
}

.ferry-lanes {
  fill: none;
  stroke: #74c3e8;
  stroke-width: 4px;
}

.streets {
  fill: none;
  stroke: #cfd0dc;
  stroke-width: 5px;
}

.avenue,
.avenue-edge,
.highway,
.highway-edge {
  fill: none;
  stroke-linejoin: round;
}

.avenue-edge {
  stroke: #b3b8ca;
  stroke-width: 18px;
}

.avenue {
  stroke: #cfd2e0;
  stroke-width: 12px;
}

.highway-edge {
  stroke: #8b98b6;
  stroke-width: 32px;
}

.highway {
  stroke: #b0b9d0;
  stroke-width: 22px;
}

.map text {
  paint-order: stroke;
  stroke-linejoin: round;
}

.place text {
  font-size: 33px;
  font-weight: 500;
  stroke: #f6f6f6;
  stroke-width: 6px;
}

.place {
  fill: #1c1c1e;
}

.place .medium {
  font-size: 34px;
}

.place .large {
  font-size: 36px;
}

.place .city {
  font-size: 48px;
  font-weight: 600;
}

.borough {
  fill: #5a5e5e;
  stroke: #fff;
  stroke-width: 6px;
  font: 500 30px Roboto, sans-serif;
}

.river-name {
  fill: #4b94d6;
  stroke: #c9e8f7;
  stroke-width: 6px;
  font-size: 34px;
  font-style: italic;
}

.airport {
  fill: #2f86e8;
  stroke: #eef2fa;
  stroke-width: 6px;
  font-size: 30px;
  font-weight: 500;
}

.route {
  fill: #fff;
  font-size: 22px;
  font-weight: 700;
  text-anchor: middle;
}

.state-route {
  fill: #3c3c3c;
  font: 700 22px Roboto, sans-serif;
  text-anchor: middle;
}

.pins rect {
  stroke: #fff;
  stroke-width: 6px;
}

.attribution {
  fill: #333;
  fill-opacity: 0.75;
}

.brand {
  font-size: 44px;
  font-weight: 500;
}

.legal {
  fill: #555;
  font-size: 29px;
  font-weight: 500;
  text-decoration: underline;
}

.expand {
  position: absolute;
  top: 24px;
  right: 24px;
  width: 120px;
  height: 120px;
  border-radius: 30px;
  background: #eef5fa;
}

.expand svg {
  fill: none;
  stroke: #5856d6;
  stroke-width: 5px;
  stroke-linecap: round;
  stroke-linejoin: round;
}

/* Tab bar */
.tabbar {
  display: flex;
  flex-direction: column;
  align-items: center;
  justify-content: space-between;
  height: 250px;
  margin-top: -1px;
  padding: 19px 0 24px;
  border-top: 1px solid #a9a9a9;
  background: #f7f7f7;
  position: relative;
}

.tabs {
  display: grid;
  grid-template-columns: 1fr 1fr;
  width: 100%;
}

.tab {
  display: flex;
  flex-direction: column;
  align-items: center;
  gap: 14px;
  color: #949494;
  font-size: 30px;
  line-height: 36px;
  font-weight: 500;
  text-decoration: none;
}

.tab svg {
  width: 74px;
  height: 74px;
  fill: currentColor;
}

.tab.active {
  color: #5856d6;
}

.home-indicator {
  width: 462px;
  height: 15px;
  border-radius: 8px;
  background: #000;
}
```
